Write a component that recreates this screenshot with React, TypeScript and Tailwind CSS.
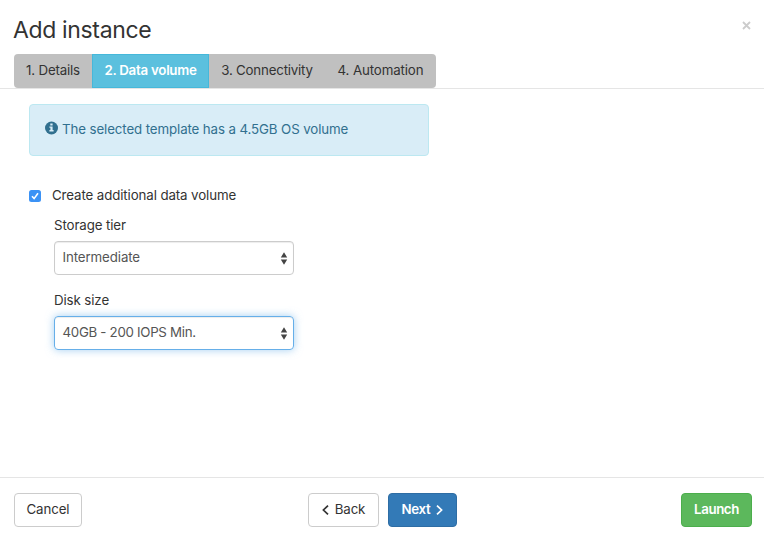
import { useState } from "react";
import type { ReactNode } from "react";

const tabs = [
  { label: "1. Details", width: "w-[78px]", tracking: "tracking-[-0.18px]" },
  { label: "2. Data volume", width: "w-[117px]", tracking: "tracking-[-0.25px]" },
  { label: "3. Connectivity", width: "w-[116px]", tracking: "tracking-[-0.2px]" },
  { label: "4. Automation", width: "w-[111px]", tracking: "tracking-[-0.12px]" },
];

function InfoIcon() {
  return (
    <svg className="mr-1 mt-[-4px] block shrink-0" width="13" height="14" viewBox="0 0 13 14">
      <circle cx="6.5" cy="7" r="6.5" fill="#31708f" />
      <path d="M5.3 2.6h2.3v1.8H5.3zM4.4 5.4h3.2v3.7h1v1.4H4.4V9.1h1V6.8h-1z" fill="#d9edf7" />
    </svg>
  );
}

function Field({ label, value, focused, className }: { label: string; value: string; focused?: boolean; className: string }) {
  return (
    <div className={className}>
      <div className="h-5 leading-5 text-[#333]">{label}</div>
      <div
        className={
          "mt-[6px] flex h-[34px] w-60 items-center justify-between rounded border pl-[7.5px] pr-[5px] text-[#555] " +
          (focused
            ? "border-[#66afe9] tracking-[-0.3px] shadow-[inset_0_1px_1px_rgba(0,0,0,0.075),0_0_8px_rgba(102,175,233,0.6)]"
            : "border-[#ccc] shadow-[inset_0_1px_1px_rgba(0,0,0,0.075)]")
        }
      >
        <span className="pb-px">{value}</span>
        <svg width="8" height="13" viewBox="0 0 8 13" fill="#444">
          <path d="M4 .3 7.2 5.5H.8zM4 12.7.8 7.5h6.4z" />
        </svg>
      </div>
    </div>
  );
}

function Button({ children, className }: { children: ReactNode; className: string }) {
  return (
    <button type="button" className={"flex h-[34px] items-center justify-center rounded border pb-px " + className}>
      {children}
    </button>
  );
}

export default function App() {
  const [active, setActive] = useState(1);
  return (
    <div className="flex h-[538px] w-[764px] flex-col bg-white font-['Inter',sans-serif] text-[13.3px] tracking-[-0.11px] text-[#333]">
      <header className="h-[89px] border-b border-[#e5e5e5] pl-[14px]">
        <div className="flex h-[54px] items-start justify-between pr-[13px]">
          <h1 className="-ml-px pt-[15px] text-[23px] leading-[30px] tracking-[-0.35px]">Add instance</h1>
          <svg className="mt-[21px]" width="9" height="9" viewBox="0 0 9 9" stroke="#ccc" strokeWidth="1.8">
            <path d="M1 1l7 7M8 1 1 8" />
          </svg>
        </div>
        <nav className="flex h-[34px] w-[422px] overflow-hidden rounded bg-[#c0c0c0]">
          {tabs.map((tab, i) => (
            <button
              key={tab.label}
              type="button"
              onClick={() => setActive(i)}
              className={
                "shrink-0 whitespace-nowrap pb-px text-center " + tab.width + " " + tab.tracking +
                (i === active ? " border border-[#46b8da] bg-[#5bc0de] font-semibold text-white" : "")
              }
            >
              {tab.label}
            </button>
          ))}
        </nav>
      </header>

      <main className="flex-1 pl-[29px] pt-[15px]">
        <div className="flex h-[52px] w-[400px] items-center rounded border border-[#bce8f1] bg-[#d9edf7] pl-[15px] text-[#31708f]">
          <InfoIcon />
          <span>The selected template has a 4.5GB OS volume</span>
        </div>
        <label className="mt-[30px] flex h-5 items-center">
          <svg className="mr-[11px]" width="12" height="12" viewBox="0 0 12 12">
            <rect width="12" height="12" rx="2.5" fill="#3b92f5" />
            <path d="M3 6.3 5.1 8.6 9 3.2" fill="none" stroke="#fff" strokeWidth="1.6" />
          </svg>
          <span>Create additional data volume</span>
        </label>
        <Field className="ml-[25px] mt-[9px]" label="Storage tier" value="Intermediate" />
        <Field className="ml-[25px] mt-[15px]" label="Disk size" value="40GB - 200 IOPS Min." focused />
      </main>

      <footer className="flex h-[61px] items-start border-t border-[#e5e5e5] pl-[14px] pr-3 pt-[15px]">
        <Button className="w-[68px] border-[#ccc]">Cancel</Button>
        <Button className="ml-[226px] w-[71px] gap-[6px] border-[#ccc]">
          <svg width="7" height="10" viewBox="0 0 7 10" fill="none" stroke="#333" strokeWidth="1.7">
            <path d="M6 .6 1.4 5 6 9.4" />
          </svg>
          Back
        </Button>
        <Button className="ml-[9px] w-[69px] gap-[6px] border-[#2e6da4] bg-[#337ab7] font-semibold tracking-[-0.3px] text-white">
          Next
          <svg width="7" height="10" viewBox="0 0 7 10" fill="none" stroke="#fff" strokeWidth="1.7">
            <path d="M1 .6 5.6 5 1 9.4" />
          </svg>
        </Button>
        <Button className="ml-auto w-[71px] border-[#4cae4c] bg-[#5cb85c] font-semibold tracking-[-0.4px] text-white">Launch</Button>
      </footer>
    </div>
  );
}
